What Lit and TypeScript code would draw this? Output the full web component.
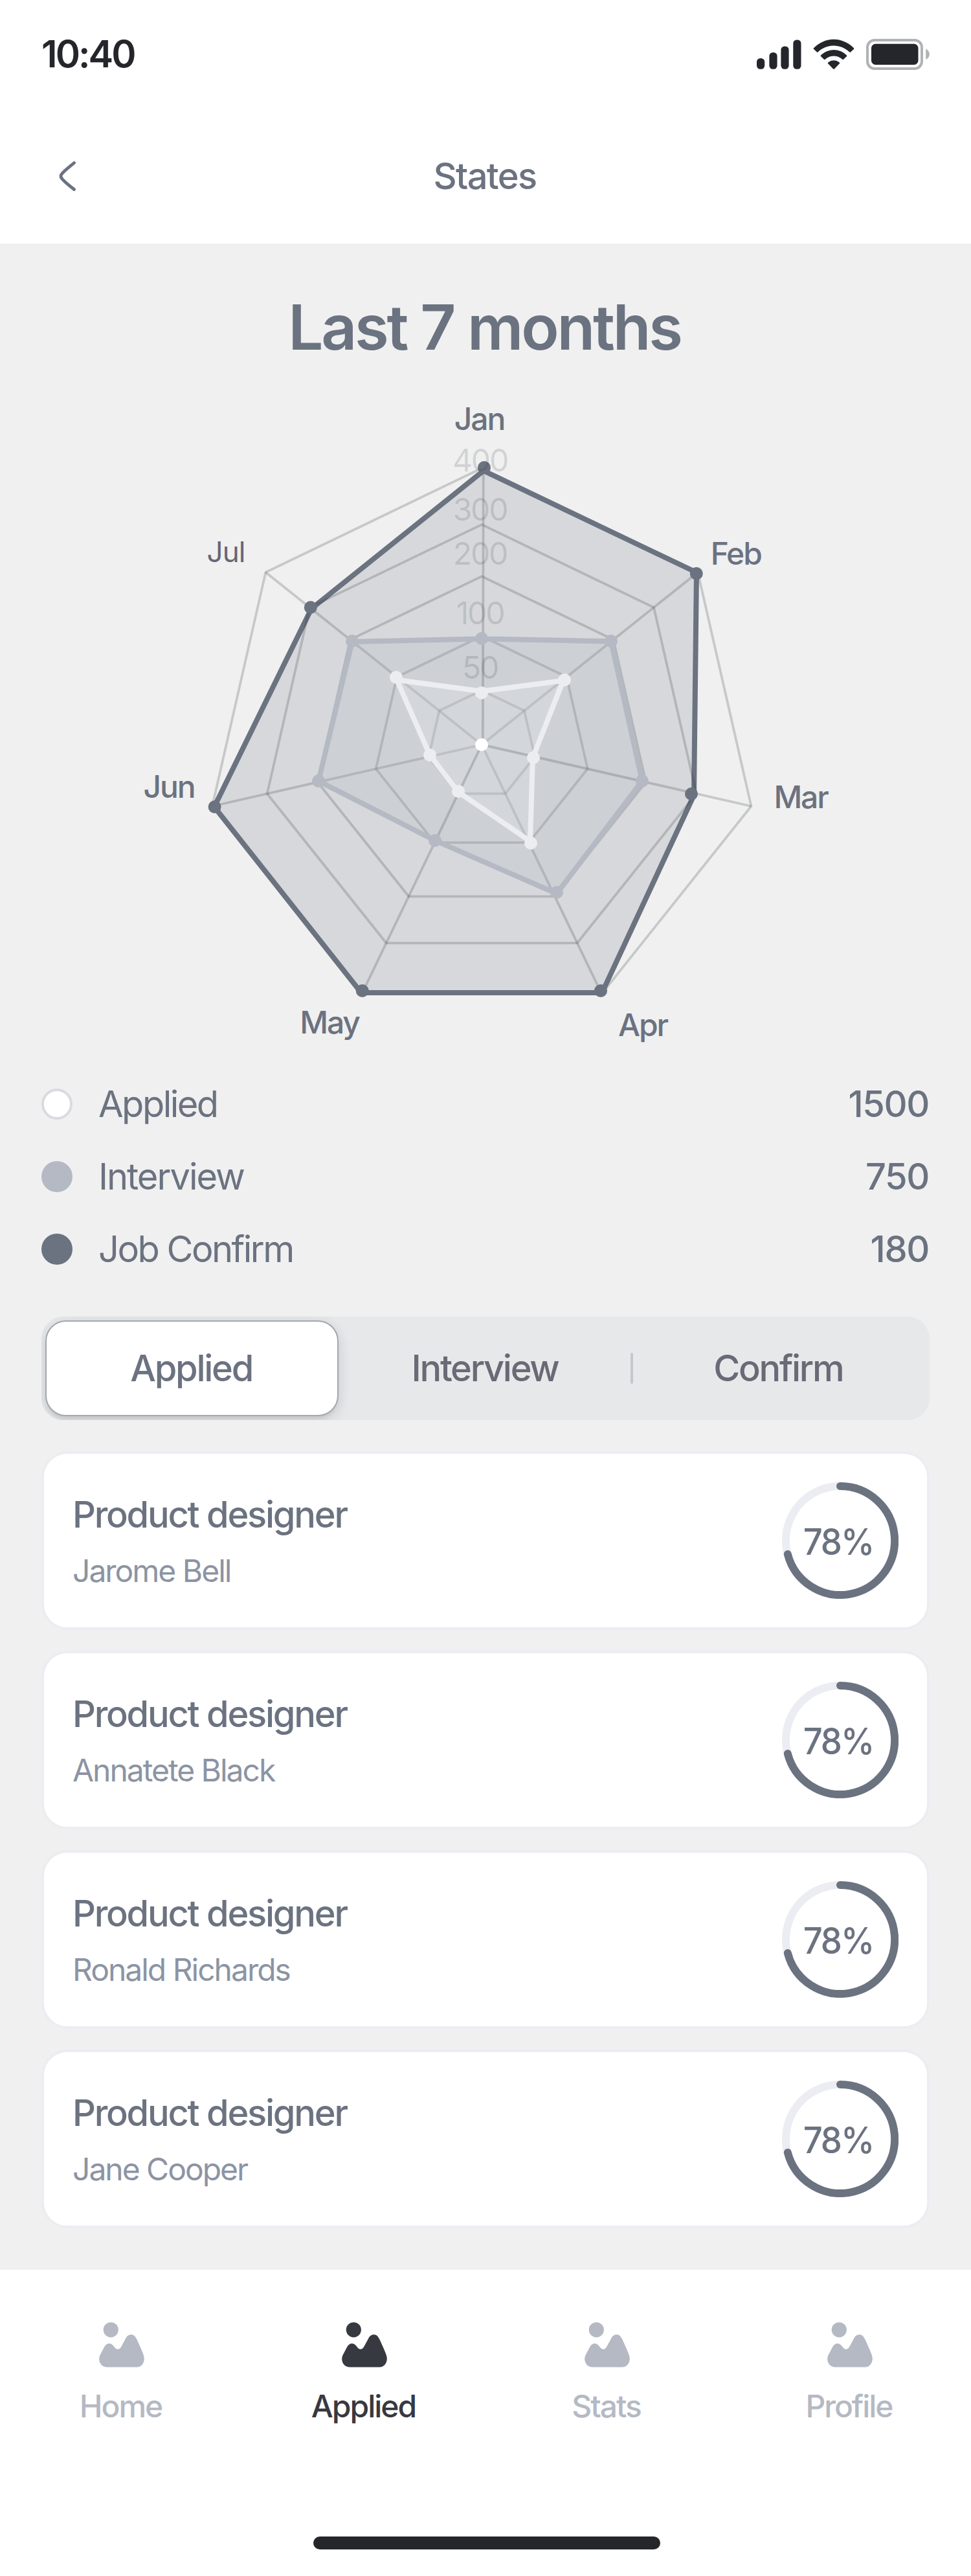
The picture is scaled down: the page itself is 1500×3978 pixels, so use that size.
import { LitElement, html, svg, css } from "lit";
import { customElement, property } from "lit/decorators.js";
import { classMap } from "lit/directives/class-map.js";

type Point = [number, number];

const CX = 744.2;
const CY = 1150;
const RINGS = [427, 340, 260, 167.7, 84];

const spoke = (i: number, r: number): Point => {
  const a = (i * 2 * Math.PI) / 7;
  return [CX + r * Math.sin(a), CY - r * Math.cos(a)];
};
const pts = (list: Point[]) => list.map((p) => p.map((n) => n.toFixed(1)).join(",")).join(" ");

const CONFIRM = {
  line: [[747, 727], [1076, 884], [1072, 1228], [930, 1533], [558, 1533], [331, 1246], [481, 940]] as Point[],
  dots: [[748, 722], [1075.8, 885.7], [1068, 1226], [928, 1530], [559.7, 1530], [331.6, 1246], [479.8, 938]] as Point[],
};
const INTERVIEW = {
  line: [[744, 986.5], [944, 990.5], [992, 1206], [860, 1380], [672, 1298], [492, 1206], [544, 991]] as Point[],
  dots: [[744, 986], [944, 990], [992, 1206], [860, 1378], [672, 1298], [492, 1206], [544, 990]] as Point[],
};
const APPLIED = {
  line: [[744, 1067.5], [870, 1051], [823, 1170], [819, 1299], [708, 1223], [664, 1166], [613, 1050]] as Point[],
  dots: [[744, 1070], [872, 1050], [824, 1170], [820, 1302], [708, 1222], [664, 1166], [612, 1046]] as Point[],
};

const MONTHS: { t: string; x: number; y: number; light?: boolean }[] = [
  { t: "Jan", x: 740.5, y: 663.7 },
  { t: "Feb", x: 1136.7, y: 872 },
  { t: "Mar", x: 1237, y: 1247.9 },
  { t: "Apr", x: 993, y: 1600 },
  { t: "May", x: 509, y: 1595.7 },
  { t: "Jun", x: 261, y: 1231.8 },
  { t: "Jul", x: 349, y: 868, light: true },
];
const SCALE: [string, number][] = [["400", 727.5], ["300", 804], ["200", 871.8], ["100", 964], ["50", 1047.6]];

@customElement("radar-chart")
export class RadarChart extends LitElement {
  static styles = css`
    :host { display: block; }
    svg { display: block; width: 100%; height: 1084px; font-family: Inter, "Liberation Sans", sans-serif; }
    .grid { fill: none; stroke: #2d3a3a; stroke-opacity: 0.21; stroke-width: 3.8; }
    .month { font-size: 48px; font-weight: 500; fill: #6b7280; letter-spacing: -0.045em; text-anchor: middle; }
    .month.light { font-size: 44px; font-weight: 400; fill: #686574; letter-spacing: -0.02em; }
    .scale { font-size: 48px; fill: #2d3a3a; fill-opacity: 0.155; letter-spacing: -0.045em; text-anchor: middle; }
    .line { fill: none; stroke-width: 8; }
    .confirm-area { fill: #6b7280; fill-opacity: 0.185; }
    .interview-area { fill: #aebac6; fill-opacity: 0.24; }
    .applied-area { fill: #ecf0ee; fill-opacity: 0.2; }
    .confirm { stroke: #6b7280; }
    .interview { stroke: #b4b9c3; }
    .applied { stroke: #ecedf1; }
    .dot-confirm { fill: #6b7280; }
    .dot-interview { fill: #b4b9c3; }
    .dot-applied { fill: #ecedf1; }
    .center { fill: #fff; }
  `;

  private dots(list: Point[], cls: string) {
    return list.map(([x, y]) => svg`<circle class=${cls} cx=${x} cy=${y} r="10"></circle>`);
  }
  private ring(r: number) {
    return svg`<polygon class="grid" points=${pts([0, 1, 2, 3, 4, 5, 6].map((i) => spoke(i, r)))}></polygon>`;
  }
  private axis(i: number) {
    const [x, y] = i === 0 ? [746.8, 724] : spoke(i, RINGS[0]);
    return svg`<line class="grid" x1=${i === 0 ? 745.8 : CX} y1=${CY} x2=${x} y2=${y}></line>`;
  }

  render() {
    return html`<svg viewBox="0 565 1500 1084" role="img" aria-label="Last 7 months">
      ${this.ring(RINGS[0])}
      <polygon class="confirm-area" points=${pts(CONFIRM.line)}></polygon>
      <polygon class="line confirm" points=${pts(CONFIRM.line)}></polygon>
      ${RINGS.slice(1).map((r) => this.ring(r))}
      ${[1, 3, 5, 6].map((i) => this.axis(i))}
      <polygon class="interview-area" points=${pts(INTERVIEW.line)}></polygon>
      <polygon class="line interview" points=${pts(INTERVIEW.line)}></polygon>
      <polygon class="applied-area" points=${pts(APPLIED.line)}></polygon>
      ${[0, 2, 4].map((i) => this.axis(i))}
      <polygon class="line applied" points=${pts(APPLIED.line)}></polygon>
      ${this.dots(CONFIRM.dots, "dot-confirm")}
      ${this.dots(INTERVIEW.dots, "dot-interview")}
      ${this.dots(APPLIED.dots, "dot-applied")}
      <circle class="center" cx="744" cy="1150" r="10"></circle>
      ${SCALE.map(([t, y]) => svg`<text class="scale" x="741.5" y=${y}>${t}</text>`)}
      ${MONTHS.map((m) => svg`<text class=${m.light ? "month light" : "month"} x=${m.x} y=${m.y}>${m.t}</text>`)}
    </svg>`;
  }
}

@customElement("job-card")
export class JobCard extends LitElement {
  @property() position = "";
  @property() person = "";
  @property() score = "";

  static styles = css`
    :host { display: block; }
    .card {
      box-sizing: border-box; height: 276px; padding: 0 44px; display: flex; align-items: center;
      justify-content: space-between; background: #fff; border: 4px solid #ecedf2; border-radius: 40px;
    }
    .text { padding-top: 2px; }
    .title { font-size: 56px; line-height: 92px; font-weight: 500; letter-spacing: -0.04em; color: #6b7280; }
    .name { font-size: 48px; line-height: 82px; letter-spacing: -0.042em; color: #8c94a3; }
    .ring { display: grid; place-items: center; width: 180px; height: 180px; }
    .ring > * { grid-area: 1 / 1; }
    svg { display: block; width: 180px; height: 180px; }
    .track { fill: none; stroke: #ecedf2; stroke-width: 12; }
    .value { fill: none; stroke: #6b7280; stroke-width: 12; stroke-linecap: round; }
    .num { font-size: 56px; line-height: 60px; font-weight: 500; letter-spacing: -0.04em; color: #6b7280; transform: scaleX(0.94); padding: 4px 6px 0 0; }
  `;

  render() {
    return html`<div class="card">
      <div class="text">
        <div class="title">${this.position}</div>
        <div class="name">${this.person}</div>
      </div>
      <div class="ring">
        <svg viewBox="0 0 180 180">
          <circle class="track" cx="90" cy="90" r="84"></circle>
          <path class="value" d="M90 6A84 84 0 1 1 8.8 111"></path>
        </svg>
        <span class="num">${this.score}</span>
      </div>
    </div>`;
  }
}

@customElement("app-root")
export class AppRoot extends LitElement {
  static styles = css`
    :host { display: block; font-family: Inter, "Liberation Sans", sans-serif; color: #6b7280; }
    .screen { width: 1500px; height: 3978px; background: #f0f0f0; display: flex; flex-direction: column; overflow: hidden; }
    .status { flex: none; height: 168px; box-sizing: border-box; padding: 0 64px 0 64px; background: #fff; display: flex; align-items: center; justify-content: space-between; }
    .time { font-size: 58px; line-height: 66px; font-weight: 600; letter-spacing: -0.05em; color: #25262b; padding-bottom: 2px; }
    .status svg { display: block; width: 268px; height: 48px; }
    .header { flex: none; height: 208px; background: #fff; display: grid; grid-template-columns: 80px 1fr 80px; align-items: center; padding: 0 64px; }
    .header svg { display: block; width: 80px; height: 80px; }
    .header h1 { margin: 0; padding-right: 2px; text-align: center; font-size: 56px; line-height: 64px; font-weight: 500; letter-spacing: -0.029em; }
    .content { flex: none; height: 3129px; box-sizing: border-box; padding-top: 69px; }
    .content h2 { margin: 0; padding-right: 3px; text-align: center; font-size: 96px; line-height: 120px; font-weight: 600; letter-spacing: -0.034em; }
    .legend { padding: 0 64px; }
    .item { display: flex; align-items: center; height: 112px; font-size: 56px; letter-spacing: -0.045em; }
    .swatch { box-sizing: border-box; width: 48px; height: 48px; border-radius: 50%; margin-right: 40px; background: #6b7280; }
    .swatch.white { background: #fff; border: 4px solid #d8dbe0; }
    .swatch.mid { background: #b4b9c3; }
    .label { flex: 1; }
    .label.wide { letter-spacing: -0.036em; }
    .count { font-weight: 500; letter-spacing: -0.025em; padding-right: 1px; }
    .tabs { display: grid; grid-template-columns: 1fr 1fr 1fr; height: 160px; box-sizing: border-box; padding: 6px; margin: 48px 64px 0; border-radius: 34px; background: #e7e8ea; overflow: hidden; }
    .tab { display: flex; align-items: center; justify-content: center; font-size: 56px; font-weight: 500; letter-spacing: -0.041em; color: #686a76; box-sizing: border-box; padding-right: 2px; }
    .tab.on { background: #fff; color: #6b7280; border: 2px solid #a3a7af; border-radius: 32px; box-shadow: 0 6px 20px rgba(0, 0, 0, 0.14), 0 4px 3px rgba(0, 0, 0, 0.04); }
    .tab.split { position: relative; }
    .tab.split::after { content: ""; position: absolute; right: -1px; top: 50px; width: 4px; height: 48px; border-radius: 2px; background: #c5c7cd; }
    .cards { display: grid; gap: 32px; padding: 0 64px; margin-top: 48px; }
    .nav { flex: none; height: 473px; box-sizing: border-box; background: #fff; padding: 76px 0 41px; display: flex; flex-direction: column; align-items: center; justify-content: space-between; }
    .links { display: grid; grid-template-columns: repeat(4, 1fr); width: 100%; }
    .link { display: flex; flex-direction: column; align-items: center; gap: 24px; color: #b4b9c3; font-size: 48px; line-height: 60px; font-weight: 500; letter-spacing: -0.042em; }
    .link span { padding: 1px 2px 0 0; }
    .link.on { color: #373941; }
    .link svg { display: block; width: 80px; height: 80px; fill: currentColor; }
    .bar { width: 536px; height: 20px; margin-left: 4px; border-radius: 10px; background: #25262b; }
  `;

  private legend = [
    { name: "Applied", count: 1500, dot: "white", text: "" },
    { name: "Interview", count: 750, dot: "mid", text: "wide" },
    { name: "Job Confirm", count: 180, dot: "dark", text: "" },
  ];
  private people = ["Jarome Bell", "Annatete Black", "Ronald Richards", "Jane Cooper"];
  private links = ["Home", "Applied", "Stats", "Profile"];

  render() {
    return html`<div class="screen">
      <div class="status">
        <div class="time">10:40</div>
        <svg viewBox="1168 60 268 48" fill="#25262b">
          <rect x="1169" y="90" width="12.2" height="16.8" rx="5.5"></rect>
          <rect x="1188.4" y="81" width="12.2" height="25.8" rx="5.5"></rect>
          <rect x="1206.4" y="71.5" width="12.2" height="35.3" rx="5.5"></rect>
          <rect x="1225.3" y="61.5" width="12.2" height="45.3" rx="5.5"></rect>
          <path d="M1257 74.3C1275 56.3 1301 56.3 1319 74.3C1319.4 74.8 1319.4 75.2 1319 75.7L1314 80.5C1313.5 81 1313 81 1312.5 80.5C1298.5 67 1277.5 67 1263.5 80.5C1263 81 1262.5 81 1262 80.5L1257 75.7C1256.6 75.2 1256.6 74.8 1257 74.3Z"></path>
          <path d="M1268 85.5C1279 74.3 1297 74.3 1308 85.5C1308.5 86 1308.5 86.6 1308 87.1L1303 91.8C1302.5 92.3 1302 92.3 1301.5 91.8C1293.5 84.8 1282.5 84.8 1274.5 91.8C1274 92.3 1273.5 92.3 1273 91.8L1268 87.1C1267.5 86.6 1267.5 86 1268 85.5Z"></path>
          <path d="M1279.2 96.5C1284 92 1292 92 1296.8 96.5C1297.4 97.1 1297.4 97.7 1296.8 98.3L1288.8 106.5C1288.3 107 1287.7 107 1287.2 106.5L1279.2 98.3C1278.6 97.7 1278.6 97.1 1279.2 96.5Z"></path>
          <rect x="1340" y="62" width="84" height="44" rx="11" fill="none" stroke="#b1b2b3" stroke-width="4"></rect>
          <rect x="1346" y="67.8" width="72.5" height="32.2" rx="6.5"></rect>
          <path d="M1430.2 75.5C1433.5 77 1435.8 80.2 1435.8 83.8C1435.8 87.4 1433.5 90.6 1430.2 92Z" fill="#b1b2b3"></path>
        </svg>
      </div>
      <div class="header">
        <svg viewBox="64 232 80 80" fill="none" stroke="#6b7280" stroke-width="4.8" stroke-linecap="round">
          <path d="M114.5 251.5C107.5 257.5 99 264 95.5 268.5C93.5 271 93.5 273.2 95.5 275.7C99 280.2 107.5 287 114.5 292.5"></path>
        </svg>
        <h1>States</h1>
      </div>
      <div class="content">
        <h2>Last 7 months</h2>
        <radar-chart></radar-chart>
        <div class="legend">
          ${this.legend.map((l) => html`<div class="item">
            <span class="swatch ${l.dot}"></span><span class="label ${l.text}">${l.name}</span><span class="count">${l.count}</span>
          </div>`)}
        </div>
        <div class="tabs">
          <div class="tab on">Applied</div>
          <div class="tab split">Interview</div>
          <div class="tab">Confirm</div>
        </div>
        <div class="cards">
          ${this.people.map((p) => html`<job-card .position=${"Product designer"} .person=${p} .score=${"78%"}></job-card>`)}
        </div>
      </div>
      <div class="nav">
        <div class="links">
          ${this.links.map((t) => html`<div class=${classMap({ link: true, on: t === "Applied" })}>
            <svg viewBox="0 0 80 80">
              <circle cx="23.3" cy="16.8" r="11.6"></circle>
              <path d="M17.5 74.5H63C70.5 74.5 75 68 74.8 61C74.7 57.5 73 53.5 70.2 46.8L63.8 32.5C61 26.5 58.5 24.3 54.5 24.3C50.5 24.3 48 26.5 46 30.5L40 41.5C38 45.3 36.5 46.8 34.2 46.8C31.5 46.8 30 45 28 42.4C25.5 39.5 23.5 38 20.8 38C17.5 38 15 40 13.2 43.2L7 55C5.5 58 5.2 60 5.2 62C5.2 69 10.5 74.5 17.5 74.5Z"></path>
            </svg>
            <span>${t}</span>
          </div>`)}
        </div>
        <div class="bar"></div>
      </div>
    </div>`;
  }
}
